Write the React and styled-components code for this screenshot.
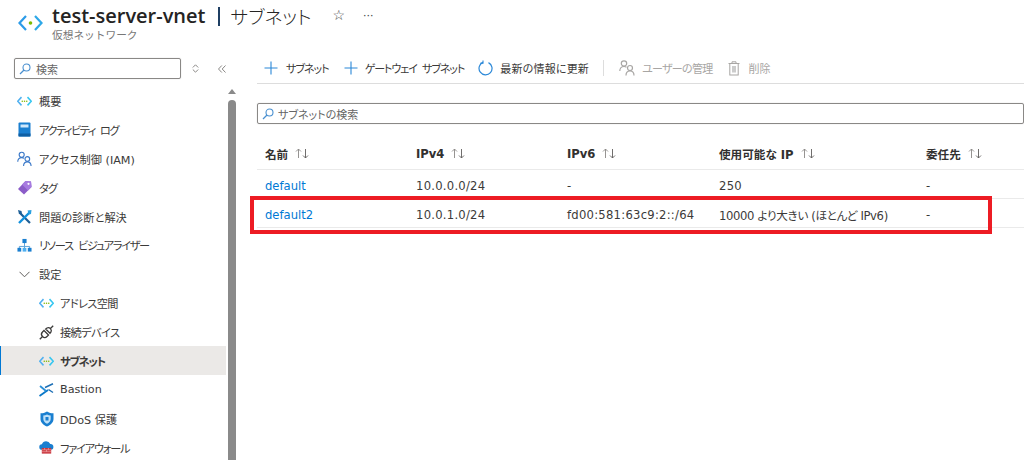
import React from 'react';
import styled, { createGlobalStyle } from 'styled-components';

const Global = createGlobalStyle`
  html, body { margin:0; padding:0; background:#fff; overflow:hidden; }
  body {
    font-family:"DejaVu Sans","Noto Sans CJK JP",sans-serif;
    font-feature-settings:"palt";
    color:#323130;
  }
`;

const Page = styled.div`
  width:1024px;
  height:460px;
  overflow:hidden;
  display:flex;
  flex-direction:column;
`;

const Header = styled.header`
  height:47px;
  flex:none;
  display:flex;
  align-items:flex-start;
  padding-left:18px;
  box-sizing:border-box;
`;
const HeaderIcon = styled.div`
  width:24px;
  height:20px;
  margin:13px 10px 0 0;
`;
const TitleBlock = styled.div`
  display:flex;
  flex-direction:column;
`;
const TitleRow = styled.div`
  display:flex;
  align-items:center;
  height:30px;
`;
const Title = styled.h1`
  margin:0;
  display:flex;
  align-items:center;
  font-family:"Open Sans","Noto Sans CJK JP",sans-serif;
  font-size:20px;
  font-weight:600;
  color:#252423;
  white-space:nowrap;
`;
const TitleBar = styled.i`
  width:2px;
  height:19px;
  background:#1f3f63;
  margin:2px 11px 0 12px;
`;
const TitlePage = styled.span`
  font-size:18.7px;
  font-weight:300;
`;
const HeaderAction = styled.span`
  margin-left:${p => p.$gap}px;
  color:#444;
  font-size:${p => p.$size}px;
  line-height:1;
`;
const Subtitle = styled.div`
  font-size:10.7px;
  font-feature-settings:normal;
  color:#777;
  line-height:14px;
  margin-top:-1px;
`;

const Body = styled.div`
  flex:1;
  display:flex;
  min-height:0;
`;

const Side = styled.aside`
  width:240px;
  flex:none;
  display:flex;
`;
const SideInner = styled.div`
  width:226px;
  flex:none;
  display:flex;
  flex-direction:column;
`;
const SideTop = styled.div`
  display:flex;
  align-items:center;
  padding:11px 0 0 14px;
  height:21px;
`;
const SearchBox = styled.div`
  box-sizing:border-box;
  display:flex;
  align-items:center;
  gap:${p => p.$gap || 5}px;
  height:21px;
  width:${p => p.$width || 'auto'};
  border:1px solid #8a8886;
  border-radius:2px;
  padding-left:4px;
  font-size:11px;
  color:#666;
  box-shadow:0 0 1px rgba(0,0,0,.3);
`;
const SideTool = styled.span`
  display:flex;
  margin-left:${p => p.$gap}px;
`;
const NavList = styled.nav`
  display:flex;
  flex-direction:column;
  margin-top:7px;
`;
const NavItem = styled.div`
  height:28.9px;
  box-sizing:border-box;
  display:flex;
  align-items:center;
  gap:${p => p.$sub ? 6 : 7}px;
  padding-left:${p => p.$active ? 38 : p.$sub ? 39 : 17}px;
  padding-top:1px;
  font-size:11.2px;
  letter-spacing:${p => p.$tight || 0}px;
  word-spacing:${p => p.$tight ? 3 : 0}px;
  color:#3b3a39;
  white-space:nowrap;
  background:${p => p.$active ? '#ebe9e7' : 'transparent'};
  border-left:${p => p.$active ? '1px solid #0078d4' : 'none'};
  font-weight:${p => p.$active ? 700 : 400};
  flex:none;
`;
const NavIcon = styled.span`
  width:15px;
  height:15px;
  flex:none;
  display:flex;
  align-items:center;
  justify-content:center;
`;

const ScrollTrack = styled.div`
  width:8px;
  margin-left:2px;
  display:flex;
  flex-direction:column;
  align-items:center;
  padding-top:42px;
  gap:6px;
`;
const ScrollArrow = styled.div`
  width:0;
  height:0;
  border-left:4px solid transparent;
  border-right:4px solid transparent;
  border-bottom:5px solid #8a8a8a;
`;
const ScrollThumb = styled.div`
  width:8px;
  flex:1;
  background:#8a8a8a;
  border-radius:4px 4px 0 0;
`;

const Main = styled.main`
  flex:1;
  min-width:0;
  display:flex;
  flex-direction:column;
  padding-left:17px;
  position:relative;
`;
const Toolbar = styled.div`
  height:37px;
  flex:none;
  display:flex;
  align-items:center;
  border-bottom:1px solid #ddd;
  padding:6px 0 0 7px;
  box-sizing:border-box;
`;
const ToolButton = styled.div`
  display:flex;
  align-items:center;
  gap:${p => p.$gap || 7}px;
  font-size:11px;
  letter-spacing:${p => p.$tight || 0}px;
  word-spacing:${p => p.$tight < 0 ? 3 : 0}px;
  white-space:nowrap;
  color:${p => p.$off ? '#a8a6a4' : '#3b3a39'};
  margin-left:${p => p.$ml || 0}px;
`;
const ToolSep = styled.div`
  width:1px;
  height:16px;
  background:#ddd;
  margin:0 15px 0 14px;
`;
const FilterWrap = styled.div`
  margin-top:19px;
  flex:none;
`;
const Table = styled.div`
  margin-top:18px;
  display:flex;
  flex-direction:column;
`;
const Row = styled.div`
  display:grid;
  grid-template-columns:151px 151px 152px 207px 1fr;
  align-items:center;
  box-sizing:border-box;
  height:${p => p.$h}px;
  padding:${p => p.$head ? '0 0 4px 8px' : '3px 0 0 8px'};
  border-bottom:1px solid #eaeaea;
  font-size:11.6px;
  color:#3b3a39;
  white-space:nowrap;
`;
const HeadCell = styled.div`
  display:flex;
  align-items:center;
  gap:7px;
  font-weight:700;
  color:#323130;
  font-size:11.6px;
`;
const Cell = styled.div`
  letter-spacing:${p => p.$tight ? -0.35 : 0.25}px;
`;
const LinkCell = styled.a`
  color:#0078d4;
  text-decoration:none;
`;
const Highlight = styled.div`
  position:absolute;
  left:10px;
  top:149px;
  width:742px;
  height:38px;
  box-sizing:border-box;
  border:4px solid #ed1c24;
  pointer-events:none;
`;

const VnetIcon = ({ size = 15 }) => (
  <svg width={size} height={size * 0.7} viewBox="0 0 20 14">
    <path d="M6 1.500 1 7l5 5.500" fill="none" stroke="#50b0f0" strokeWidth="2" strokeLinejoin="round" />
    <path d="M14 1.500 19 7l-5 5.500" fill="none" stroke="#35c6f0" strokeWidth="2" strokeLinejoin="round" />
    <circle cx="7" cy="7" r="1" fill="#7fba00" />
    <circle cx="10" cy="7" r="1" fill="#7fba00" />
    <circle cx="13" cy="7" r="1" fill="#7fba00" />
  </svg>
);
const BigVnet = () => (
  <svg width="25" height="20" viewBox="0 0 25 20">
    <path d="M8 3 1.500 10 8 17" fill="none" stroke="#2b9be8" strokeWidth="2.200" />
    <path d="M17 3l6.500 7L17 17" fill="none" stroke="#2ea8e8" strokeWidth="2.200" />
    <circle cx="12.500" cy="10" r="1.800" fill="#7fba00" />
  </svg>
);
const SearchGlyph = () => (
  <svg width="12" height="12" viewBox="0 0 12 12">
    <circle cx="7.500" cy="4.500" r="3.500" fill="none" stroke="#4a90d0" strokeWidth="1.100" />
    <path d="M5 7 1 11" stroke="#4a90d0" strokeWidth="1.300" />
  </svg>
);
const UpDown = () => (
  <svg width="7" height="9" viewBox="0 0 7 9" fill="none" stroke="#8a8886" strokeWidth="1">
    <path d="M.8 3.500 3.500 .8 6.200 3.500M.8 5.500 3.500 8.200 6.200 5.500" />
  </svg>
);
const Collapse = () => (
  <svg width="8" height="8" viewBox="0 0 8 8" fill="none" stroke="#8a8886" strokeWidth="1">
    <path d="M3.800 .5.500 4l3.300 3.500M7.500 .5 4.200 4l3.300 3.500" />
  </svg>
);
const Book = () => (
  <svg width="13" height="15" viewBox="0 0 13 15">
    <rect x="0.500" y="0.500" width="12" height="14" rx="1" fill="#1a7fd0" />
    <rect x="0.500" y="11.500" width="12" height="3" fill="#0f5fa3" />
    <rect x="2.500" y="2.500" width="8" height="3" fill="#cfe8fb" />
  </svg>
);
const People = ({ color = '#3a78c8', size = 16 }) => (
  <svg width={size} height={size} viewBox="0 0 16 16" fill="none" stroke={color} strokeWidth="1.200">
    <circle cx="5" cy="3.500" r="2.700" />
    <path d="M.8 11c0-3 1.800-4.500 4.200-4.500 1 0 1.800.2 2.500.7" />
    <circle cx="11" cy="8" r="2.500" />
    <path d="M7 15.500c0-2.800 1.700-4.500 4-4.500s4 1.700 4 4.500" />
  </svg>
);
const Tag = () => (
  <svg width="15" height="15" viewBox="0 0 15 15">
    <path d="M8.500 1 14 1.500 14.500 7 7 14.500 1 9z" fill="#8b5cc8" />
    <path d="M8.500 1 14 1.500 14.500 7 11 10.500 5 4.500z" fill="#a77be0" />
    <circle cx="11.500" cy="3.800" r="1.100" fill="#fff" />
  </svg>
);
const Tools = () => (
  <svg width="15" height="15" viewBox="0 0 15 15">
    <path d="M13 14 2.500 3.500" stroke="#1d5f96" strokeWidth="2.200" />
    <path d="M2 14 13 3" stroke="#1291dc" strokeWidth="2.400" />
    <path d="M1 1 4.500 2 5 5 2 5z" fill="#1d5f96" />
    <path d="M10.500 1.500 14.500 1 14 5l-2 .5z" fill="#2aa0e0" />
  </svg>
);
const Visualizer = () => (
  <svg width="16" height="15" viewBox="0 0 16 15">
    <path d="M8 4v5M2.500 11V8.500h11V11M8 9v2" fill="none" stroke="#5aa0d8" strokeWidth="1" />
    <rect x="5.800" y="0.500" width="4.400" height="4.400" fill="#1a7fd0" />
    <rect x="0.500" y="10" width="4" height="4" fill="#1a7fd0" />
    <rect x="6" y="10" width="4" height="4" fill="#50b0f0" />
    <rect x="11.500" y="10" width="4" height="4" fill="#1a7fd0" />
  </svg>
);
const Chevron = () => (
  <svg width="11" height="7" viewBox="0 0 11 7">
    <path d="M.5 .8 5.500 5.800 10.500 .8" fill="none" stroke="#605e5c" strokeWidth="1" />
  </svg>
);
const Plug = () => (
  <svg width="15" height="15" viewBox="0 0 15 15" fill="none" stroke="#3b3a39" strokeWidth="1.300">
    <path d="M.8 14.200 4 11" />
    <path d="M5 5.500 9.500 10 8 11.500a3 3 0 0 1-4.500-4.500z" fill="#fff" />
    <path d="M14.200 .8 11 4M6.700 4 11 8.300 12 7a3 3 0 0 0-4-4z" />
  </svg>
);
const BastionIcon = () => (
  <svg width="15" height="14" viewBox="0 0 15 14" fill="none">
    <path d="M.5 13 9 7" stroke="#0a78c8" strokeWidth="1.800" />
    <path d="M1 3l6 5" stroke="#2a8fd8" strokeWidth="1.800" />
    <path d="M6 4.500 14 .8M9.500 6.500l4.500 3" stroke="#1d6fb5" strokeWidth="1.500" />
  </svg>
);
const Shield = () => (
  <svg width="14" height="16" viewBox="0 0 14 16">
    <path d="M7 .5c2 1.300 4 1.800 6.500 1.800V8c0 3.500-3 6.300-6.500 7.500C3.500 14.300.5 11.500.5 8V2.300C3 2.300 5 1.800 7 .5z" fill="#1a7fd0" />
    <path d="M7 3.500c1.200.7 2.400 1 3.700 1V8c0 2.200-1.700 3.800-3.700 4.700-2-.9-3.700-2.500-3.700-4.700V4.500C4.600 4.500 5.800 4.200 7 3.500z" fill="#bfe0f8" />
    <rect x="5.500" y="6" width="3" height="3.500" fill="#1a7fd0" />
  </svg>
);
const Firewall = () => (
  <svg width="16" height="15" viewBox="0 0 16 15">
    <path d="M3.500 10a3 3 0 0 1-.4-6A4.800 4.800 0 0 1 12 3.800 3.100 3.100 0 0 1 12.500 10z" fill="#1a7fd0" />
    <rect x="3" y="8" width="10" height="6" fill="#c8323a" />
    <path d="M3 10h10M3 12h10M6 8v2M10 8v2M8 10v2" stroke="#f3b0b0" strokeWidth=".7" />
  </svg>
);
const Plus = () => (
  <svg width="14" height="14" viewBox="0 0 14 14">
    <path d="M7 .5v13M.5 7h13" stroke="#2b88d8" strokeWidth="1.100" />
  </svg>
);
const Refresh = () => (
  <svg width="15" height="16" viewBox="0 0 15 16" fill="none">
    <path d="M5 2.400A6.500 6.500 0 1 0 10.500 2.600" stroke="#2b88d8" strokeWidth="1.200" />
    <path d="M5 .5v2.600H2.500" stroke="#2b88d8" strokeWidth="1.100" />
  </svg>
);
const Trash = () => (
  <svg width="12" height="15" viewBox="0 0 12 15" fill="none" stroke="#a8a6a4" strokeWidth="1">
    <path d="M.5 2.500h11M4 2.500V.8h4v1.700" />
    <rect x="1.800" y="2.500" width="8.400" height="11.500" />
    <rect x="4" y="5" width="4" height="6.500" fill="#ccc" stroke="none" />
  </svg>
);
const Sort = () => (
  <svg width="15" height="11" viewBox="0 0 15 11" fill="none" stroke="#605e5c" strokeWidth=".9">
    <path d="M3.500 10V1M1 3.500 3.500 1 6 3.500" stroke="#8a8886" />
    <path d="M10.500 1v9M8 7.500l2.500 2.500L13 7.500" />
  </svg>
);

const navItems = [
  { icon: <VnetIcon />, label: '概要' },
  { icon: <Book />, label: 'アクティビティ ログ', tight: -1.5 },
  { icon: <People />, label: 'アクセス制御 (IAM)' },
  { icon: <Tag />, label: 'タグ', tight: -1 },
  { icon: <Tools />, label: '問題の診断と解決' },
  { icon: <Visualizer />, label: 'リソース ビジュアライザー', tight: -1.3 },
  { icon: <Chevron />, label: '設定' },
  { icon: <VnetIcon />, label: 'アドレス空間', sub: true, tight: -0.6 },
  { icon: <Plug />, label: '接続デバイス', sub: true, tight: -0.6 },
  { icon: <VnetIcon />, label: 'サブネット', sub: true, active: true, tight: -1.2 },
  { icon: <BastionIcon />, label: 'Bastion', sub: true },
  { icon: <Shield />, label: 'DDoS 保護', sub: true },
  { icon: <Firewall />, label: 'ファイアウォール', sub: true, tight: -1.2 },
];

const columns = ['名前', 'IPv4', 'IPv6', '使用可能な IP', '委任先'];
const rows = [
  ['default', '10.0.0.0/24', '-', '250', '-'],
  ['default2', '10.0.1.0/24', 'fd00:581:63c9:2::/64', '10000 より大きい (ほとんど IPv6)', '-'],
];

export default function App() {
  return (
    <Page>
      <Global />
      <Header>
        <HeaderIcon><BigVnet /></HeaderIcon>
        <TitleBlock>
          <TitleRow>
            <Title>test-server-vnet<TitleBar /><TitlePage>サブネット</TitlePage></Title>
            <HeaderAction $gap={21} $size={14}>☆</HeaderAction>
            <HeaderAction $gap={18} $size={11}>···</HeaderAction>
          </TitleRow>
          <Subtitle>仮想ネットワーク</Subtitle>
        </TitleBlock>
      </Header>
      <Body>
        <Side>
          <SideInner>
            <SideTop>
              <SearchBox $width="169px"><SearchGlyph />検索</SearchBox>
              <SideTool $gap={11}><UpDown /></SideTool>
              <SideTool $gap={19}><Collapse /></SideTool>
            </SideTop>
            <NavList>
              {navItems.map(item => (
                <NavItem key={item.label} $sub={item.sub} $active={item.active} $tight={item.tight}>
                  <NavIcon>{item.icon}</NavIcon>
                  {item.label}
                </NavItem>
              ))}
            </NavList>
          </SideInner>
          <ScrollTrack>
            <ScrollArrow />
            <ScrollThumb />
          </ScrollTrack>
        </Side>
        <Main>
          <Toolbar>
            <ToolButton $gap={8} $tight={-1}><Plus />サブネット</ToolButton>
            <ToolButton $ml={15} $gap={7} $tight={-1.1}><Plus />ゲートウェイ サブネット</ToolButton>
            <ToolButton $ml={14} $gap={7} $tight={0.2}><Refresh />最新の情報に更新</ToolButton>
            <ToolSep />
            <ToolButton $off $tight={-0.7}><People color="#a8a6a4" />ユーザーの管理</ToolButton>
            <ToolButton $off $ml={15} $gap={9}><Trash />削除</ToolButton>
          </Toolbar>
          <FilterWrap>
            <SearchBox $gap={4}><SearchGlyph />サブネットの検索</SearchBox>
          </FilterWrap>
          <Table>
            <Row $h={28} $head>
              {columns.map(c => <HeadCell key={c}>{c} <Sort /></HeadCell>)}
            </Row>
            {rows.map(r => (
              <Row key={r[0]} $h={29}>
                <LinkCell>{r[0]}</LinkCell>
                {r.slice(1).map((v, i) => <Cell key={i} $tight={v.includes('より')}>{v}</Cell>)}
              </Row>
            ))}
          </Table>
          <Highlight />
        </Main>
      </Body>
    </Page>
  );
}
